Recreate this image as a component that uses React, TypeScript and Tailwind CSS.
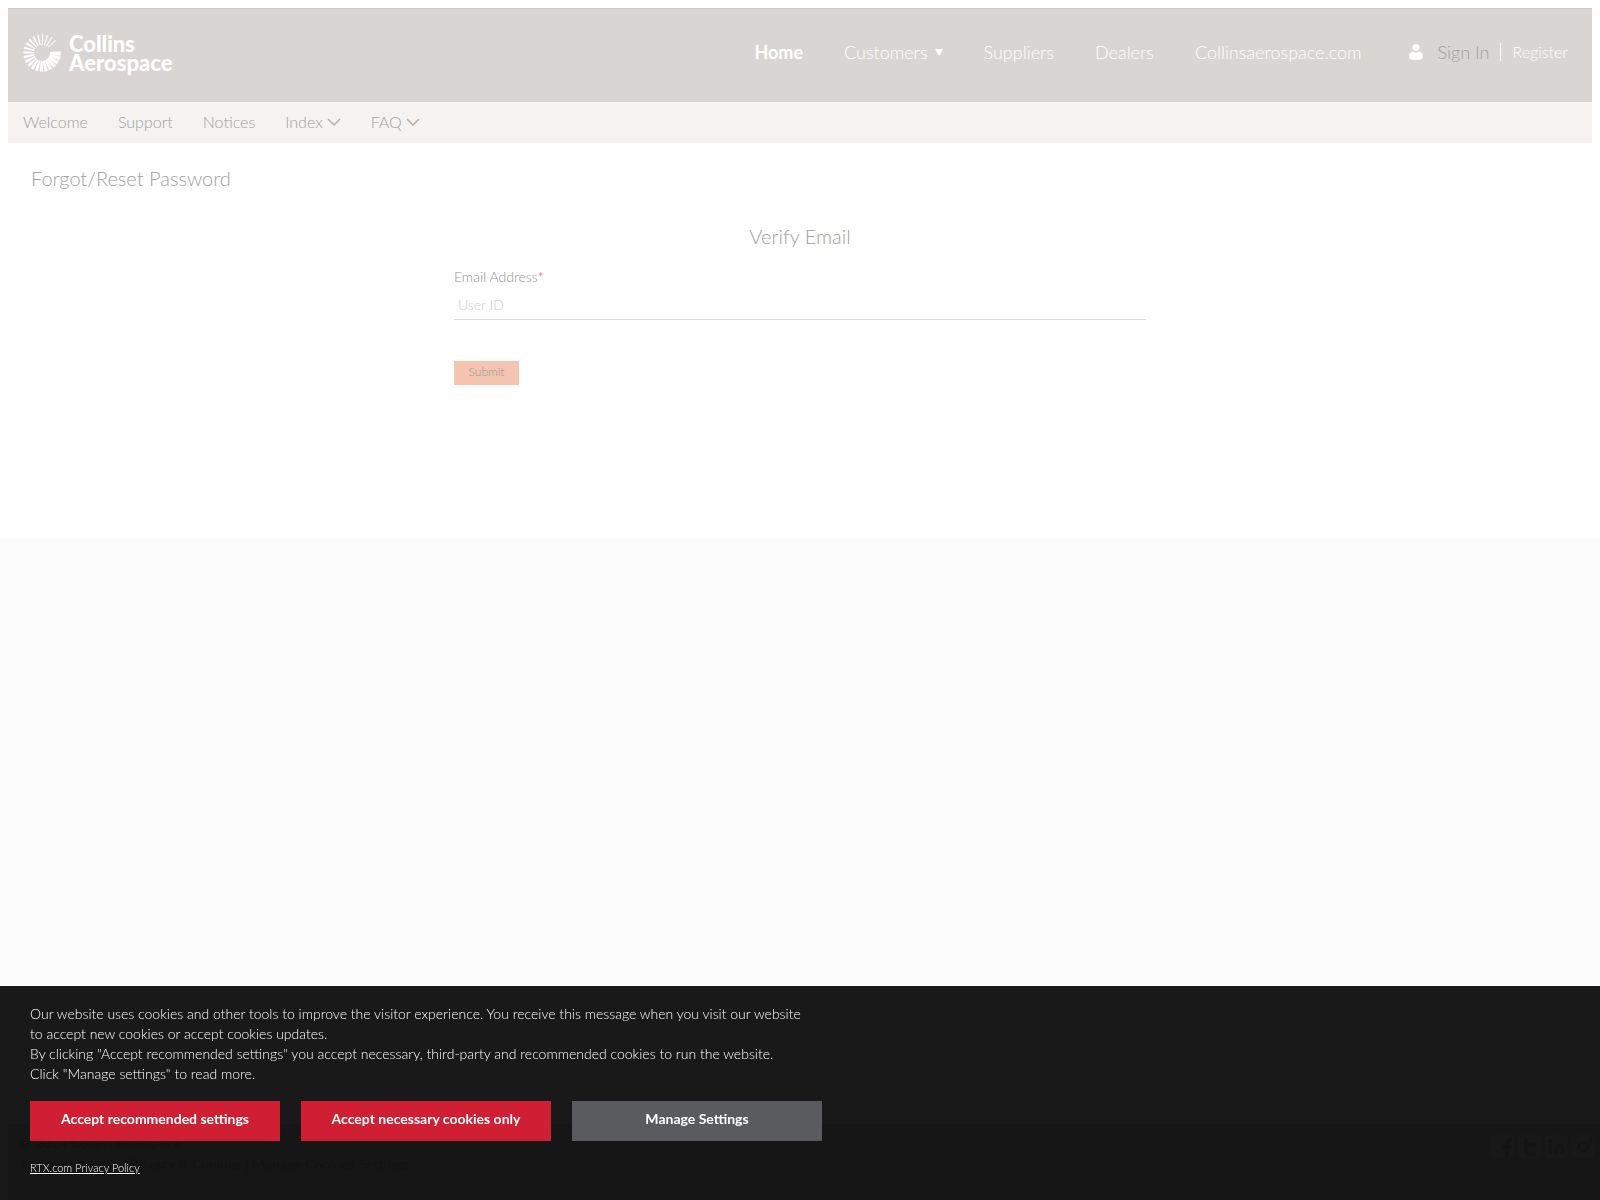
import type { ReactNode } from "react";

const RAYS = Array.from({ length: 22 }, (_, i) => i);

function SunMark() {
  return (
    <svg viewBox="-50 -50 100 100" className="size-[38px] shrink-0" fill="white" aria-hidden="true">
      {RAYS.map((i) => {
        const outer = 5.4 - (i * 4.2) / 21;
        const inner = 3.2 - (i * 2.2) / 21;
        return (
          <polygon
            key={i}
            points={`21,${-inner} 49,${-outer} 49,${outer} 21,${inner}`}
            transform={`rotate(${2 + i * 15})`}
          />
        );
      })}
    </svg>
  );
}

function Chevron() {
  return (
    <svg viewBox="0 0 14 8" className="h-2 w-3.5" fill="none" stroke="#b0b0b0" strokeWidth="1.5" aria-hidden="true">
      <path d="M1 1l6 6 6-6" />
    </svg>
  );
}

function UserIcon() {
  return (
    <svg viewBox="0 0 14 16" className="h-4 w-3.5" fill="white" aria-hidden="true">
      <circle cx="7" cy="3.500" r="3.500" />
      <path d="M0 12.4C0 9.600 2 8 3.800 7.600c1.900 1.200 4.500 1.200 6.400 0C12 8 14 9.600 14 12.400 14 15 11 16 7 16s-7-1-7-3.600z" />
    </svg>
  );
}

const social: { label: string; drawing: ReactNode }[] = [
  {
    label: "Facebook",
    drawing: <path d="M14 23v-9h-3v-4h3V7.500C14 4.500 16 3 18.500 3H21v4h-1.500c-1 0-1.500.5-1.500 1.300V10h3l-.5 4H18v9z" fill="currentColor" />,
  },
  {
    label: "Twitter",
    drawing: <path d="M8 5v9.500c0 2.500 1.500 4 4 4h4M8 9.500h8" fill="none" stroke="currentColor" strokeWidth="4" strokeLinecap="round" />,
  },
  {
    label: "LinkedIn",
    drawing: (
      <g fill="currentColor">
        <circle cx="5.500" cy="6" r="2" />
        <path d="M4 9.500h3V19H4zM9.500 9.500h3v1.300c.8-1 1.800-1.500 3-1.500 2.500 0 3.500 1.600 3.500 4.200V19h-3v-5c0-1.300-.5-2-1.600-2s-1.900.8-1.900 2.200V19h-3z" />
      </g>
    ),
  },
  {
    label: "Instagram",
    drawing: (
      <g fill="none" stroke="currentColor">
        <path d="M0 8h6.500M16.500 8H23M3 1v5M5.500 1v5" />
        <circle cx="11.500" cy="11.500" r="4.500" strokeWidth="2.500" />
        <rect x="17" y="3" width="3" height="3" fill="currentColor" />
      </g>
    ),
  },
];

export default function App() {
  return (
    <div className="flex min-h-screen flex-col bg-[#fcfcfc] font-['Lato',sans-serif] font-light text-[#a0a0a0]">
      <div className="min-h-[538px] bg-white px-2 pt-2">
        <header className="flex h-[94px] items-start justify-between border-t border-[#cdcbc9] bg-[#d9d5d2] pr-6 pl-[15px] text-white">
          <a href="#" className="mt-[25px] flex items-center gap-2" aria-label="Collins Aerospace">
            <SunMark />
            <span className="text-[22px] leading-[19px] font-black">
              Collins
              <br />
              Aerospace
            </span>
          </a>
          <div className="mt-[31px] flex h-6 items-center">
            <nav className="flex items-center gap-[41px] text-lg text-white">
              <a href="#" className="font-bold">Home</a>
              <a href="#" className="flex items-center gap-[7px]">
                Customers
                <svg viewBox="0 0 8 7" className="h-[7px] w-2" fill="white" aria-hidden="true">
                  <path d="M0 0h8L4 7z" />
                </svg>
              </a>
              <a href="#">Suppliers</a>
              <a href="#">Dealers</a>
              <a href="#">Collinsaerospace.com</a>
            </nav>
            <div className="ml-[47px] flex items-center">
              <UserIcon />
              <a href="#" className="ml-[15px] text-lg text-[#a0a0a0]">Sign In</a>
              <span className="mx-[11px] h-[18px] w-px bg-white" />
              <a href="#" className="text-base">Register</a>
            </div>
          </div>
        </header>
        <nav className="flex h-[41px] items-center gap-[30px] bg-[#f4f3f1] pb-0.5 pl-[15px] text-base">
          <a href="#">Welcome</a>
          <a href="#">Support</a>
          <a href="#">Notices</a>
          <a href="#" className="flex items-center gap-1">Index <Chevron /></a>
          <a href="#" className="flex items-center gap-1">FAQ <Chevron /></a>
        </nav>
        <main>
          <h1 className="mt-[21px] pl-[23px] text-xl leading-7">Forgot/Reset Password</h1>
          <form className="mx-auto w-[692px] max-w-full" onSubmit={(e) => e.preventDefault()}>
            <h2 className="mt-[30px] text-center text-xl leading-7">Verify Email</h2>
            <label htmlFor="email" className="mt-[17px] block text-sm text-[#909090]">
              Email Address<span className="font-normal text-[#f08c98]">*</span>
            </label>
            <input
              id="email"
              type="text"
              placeholder="User ID"
              className="h-[33px] w-full border-b border-[#dddfdf] px-1 pt-0.5 text-sm outline-none placeholder:text-[#cccccc]"
            />
            <button className="mt-[41px] block h-6 w-[65px] bg-[#f5c4b1] pb-0.5 text-xs text-[#9c9390]">
              Submit
            </button>
          </form>
        </main>
      </div>

      <footer className="mt-auto ml-2 flex h-[76px] justify-between bg-[#dcdcdc] pt-2 pr-[5px] pl-3 text-sm leading-[21px] font-bold text-[#c0c0c0]">
        <div>
          <p>© 2024 Collins Aerospace</p>
          <p>
            <a href="#">Terms of Access</a> | <a href="#">Privacy &amp; Cookies</a> | <a href="#">Manage Cookies Settings</a>
          </p>
        </div>
        <div className="flex items-start gap-1 pt-[3px]">
          {social.map(({ label, drawing }) => (
            <a key={label} href="#" aria-label={label} className="size-[23px] overflow-hidden rounded bg-[#f4f4f4] text-[#c8c8c8]">
              <svg viewBox="0 0 23 23" className="size-full" aria-hidden="true">{drawing}</svg>
            </a>
          ))}
        </div>
      </footer>

      <section aria-label="Cookie settings" className="fixed inset-x-0 bottom-0 bg-black/90 px-[30px] pt-[18px] pb-[22px] text-white">
        <div className="max-w-[792px]">
          <p className="max-w-[780px] text-sm leading-5">
            Our website uses cookies and other tools to improve the visitor experience. You receive this message when you visit our website to accept new cookies or accept cookies updates.
            <br />
            By clicking "Accept recommended settings" you accept necessary, third-party and recommended cookies to run the website.
            <br />
            Click "Manage settings" to read more.
          </p>
          <div className="mt-[17px] grid grid-cols-3 gap-[21px] text-sm font-bold">
            <button className="h-10 bg-[#d01f32] pb-1">Accept recommended settings</button>
            <button className="h-10 bg-[#d01f32] pb-1">Accept necessary cookies only</button>
            <button className="h-10 bg-[#5a5b5e] pb-1">Manage Settings</button>
          </div>
          <a href="#" className="mt-[17px] block w-fit text-[11px] leading-5 underline">RTX.com Privacy Policy</a>
        </div>
      </section>
    </div>
  );
}
